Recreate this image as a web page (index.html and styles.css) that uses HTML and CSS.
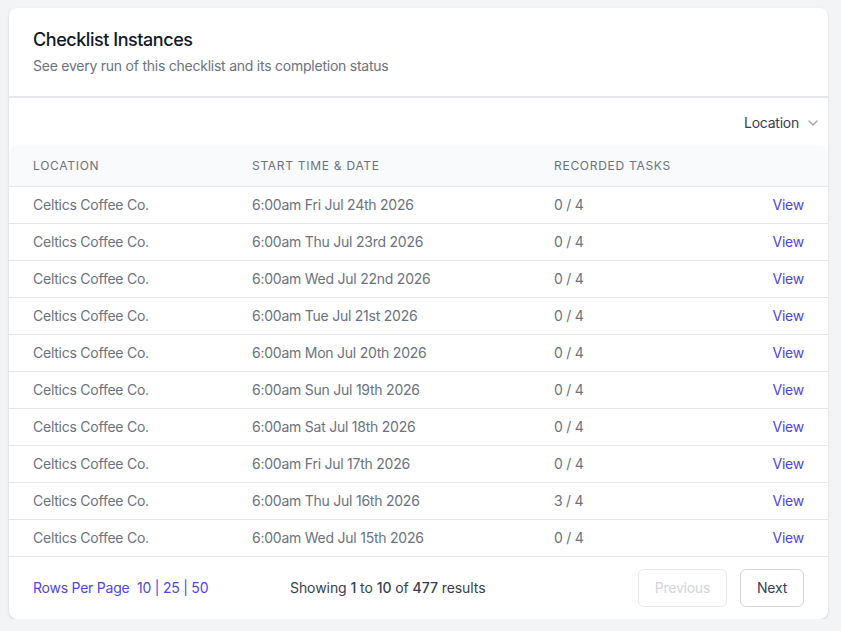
FILE: index.html
```html
<!DOCTYPE html>
<html>
<head>
<meta charset="utf-8">
<link rel="stylesheet" href="styles.css">
</head>
<body>
<div class="card">
  <div class="card-header">
    <h1 class="title">Checklist Instances</h1>
    <p class="subtitle">See every run of this checklist and its completion status</p>
  </div>
  <div class="filters">
    <button class="dropdown">Location
      <svg class="chev" width="10" height="6" viewBox="0 0 10 6"><path d="M1 1l4 4 4-4" fill="none" stroke="#9ca3af" stroke-width="1.3" stroke-linecap="round" stroke-linejoin="round"/></svg>
    </button>
  </div>
  <table class="tbl">
    <colgroup>
      <col class="c1"><col class="c2"><col class="c3"><col class="c4">
    </colgroup>
    <thead>
      <tr><th>Location</th><th>Start Time &amp; Date</th><th>Recorded Tasks</th><th></th></tr>
    </thead>
    <tbody>
      <tr><td>Celtics Coffee Co.</td><td>6:00am Fri Jul 24th 2026</td><td>0 / 4</td><td class="act"><a href="#">View</a></td></tr>
      <tr><td>Celtics Coffee Co.</td><td>6:00am Thu Jul 23rd 2026</td><td>0 / 4</td><td class="act"><a href="#">View</a></td></tr>
      <tr><td>Celtics Coffee Co.</td><td>6:00am Wed Jul 22nd 2026</td><td>0 / 4</td><td class="act"><a href="#">View</a></td></tr>
      <tr><td>Celtics Coffee Co.</td><td>6:00am Tue Jul 21st 2026</td><td>0 / 4</td><td class="act"><a href="#">View</a></td></tr>
      <tr><td>Celtics Coffee Co.</td><td>6:00am Mon Jul 20th 2026</td><td>0 / 4</td><td class="act"><a href="#">View</a></td></tr>
      <tr><td>Celtics Coffee Co.</td><td>6:00am Sun Jul 19th 2026</td><td>0 / 4</td><td class="act"><a href="#">View</a></td></tr>
      <tr><td>Celtics Coffee Co.</td><td>6:00am Sat Jul 18th 2026</td><td>0 / 4</td><td class="act"><a href="#">View</a></td></tr>
      <tr><td>Celtics Coffee Co.</td><td>6:00am Fri Jul 17th 2026</td><td>0 / 4</td><td class="act"><a href="#">View</a></td></tr>
      <tr><td>Celtics Coffee Co.</td><td>6:00am Thu Jul 16th 2026</td><td>3 / 4</td><td class="act"><a href="#">View</a></td></tr>
      <tr><td>Celtics Coffee Co.</td><td>6:00am Wed Jul 15th 2026</td><td>0 / 4</td><td class="act"><a href="#">View</a></td></tr>
    </tbody>
  </table>
  <div class="footer">
    <div class="rows-per-page">Rows Per Page <span class="opts"><a href="#">10</a> | <a href="#">25</a> | <a href="#">50</a></span></div>
    <div class="showing">Showing <b>1</b> to <b>10</b> of <b>477</b> results</div>
    <div class="pager">
      <button class="btn disabled">Previous</button>
      <button class="btn">Next</button>
    </div>
  </div>
</div>
</body>
</html>
```
FILE: styles.css
```css
* { box-sizing: border-box; }
html, body { margin: 0; padding: 0; }
body {
  background: #f3f4f6;
  font-family: Inter, "Noto Sans", sans-serif;
  color: #374151;
  padding: 8px 13px 0 9px;
  letter-spacing: -0.015em;
}
.card {
  background: #fff;
  border-radius: 8px;
  box-shadow: 0 1px 3px rgba(0,0,0,0.1), 0 1px 2px rgba(0,0,0,0.06);
  width: 819px;
}
.card-header {
  padding: 20px 24px;
  border-bottom: 2px solid #e5e7eb;
}
.title {
  margin: 0;
  font-size: 18px;
  line-height: 24px;
  font-weight: 500;
  letter-spacing: -0.025em;
  color: #111827;
}
.subtitle {
  margin: 4px 0 0;
  font-size: 14px;
  line-height: 20px;
  color: #6b7280;
}
.filters {
  display: flex;
  justify-content: flex-end;
  padding: 0 10px 0 0;
  height: 48px;
  align-items: center;
}
.dropdown {
  display: flex;
  align-items: center;
  gap: 9px;
  border: 0;
  background: none;
  font-family: inherit;
  letter-spacing: inherit;
  font-size: 14px;
  line-height: 20px;
  color: #374151;
  padding: 0;
  margin-top: 2px;
}
.tbl {
  width: 100%;
  border-collapse: separate;
  border-spacing: 0;
  table-layout: fixed;
}
.c1 { width: 219px; }
.c2 { width: 302px; }
.c4 { width: 100px; }
.tbl th {
  background: #f9fafb;
  text-align: left;
  font-size: 12px;
  line-height: 20px;
  font-weight: 400;
  letter-spacing: 0.06em;
  text-transform: uppercase;
  color: #6b7280;
  padding: 10px 24px;
  border-bottom: 1px solid #e5e7eb;
}
.tbl th:first-child { border-top-left-radius: 8px; }
.tbl th:last-child { border-top-right-radius: 8px; }
.tbl td {
  font-size: 14px;
  line-height: 20px;
  color: #6b7280;
  padding: 8px 24px;
  border-bottom: 1px solid #e5e7eb;
  white-space: nowrap;
}
.tbl td.act { text-align: right; }
.tbl a { color: #4f46e5; text-decoration: none; }
.footer {
  display: grid;
  grid-template-columns: 257px 1fr auto;
  align-items: center;
  padding: 12px 24px;
  font-size: 14px;
  line-height: 20px;
}
.rows-per-page { color: #4f46e5; }
.rows-per-page .opts { margin-left: 4px; }
.rows-per-page a { color: #4f46e5; text-decoration: none; }
.showing { color: #374151; letter-spacing: -0.005em; }
.showing b { font-weight: 500; }
.pager { display: flex; gap: 13px; }
.btn {
  font-family: inherit;
  letter-spacing: inherit;
  font-size: 14px;
  line-height: 20px;
  padding: 8px 16px;
  height: 38px;
  border: 1px solid #d1d5db;
  border-radius: 6px;
  background: #fff;
  color: #374151;
}
.btn.disabled { color: #d1d5db; border-color: #e5e7eb; }
```
